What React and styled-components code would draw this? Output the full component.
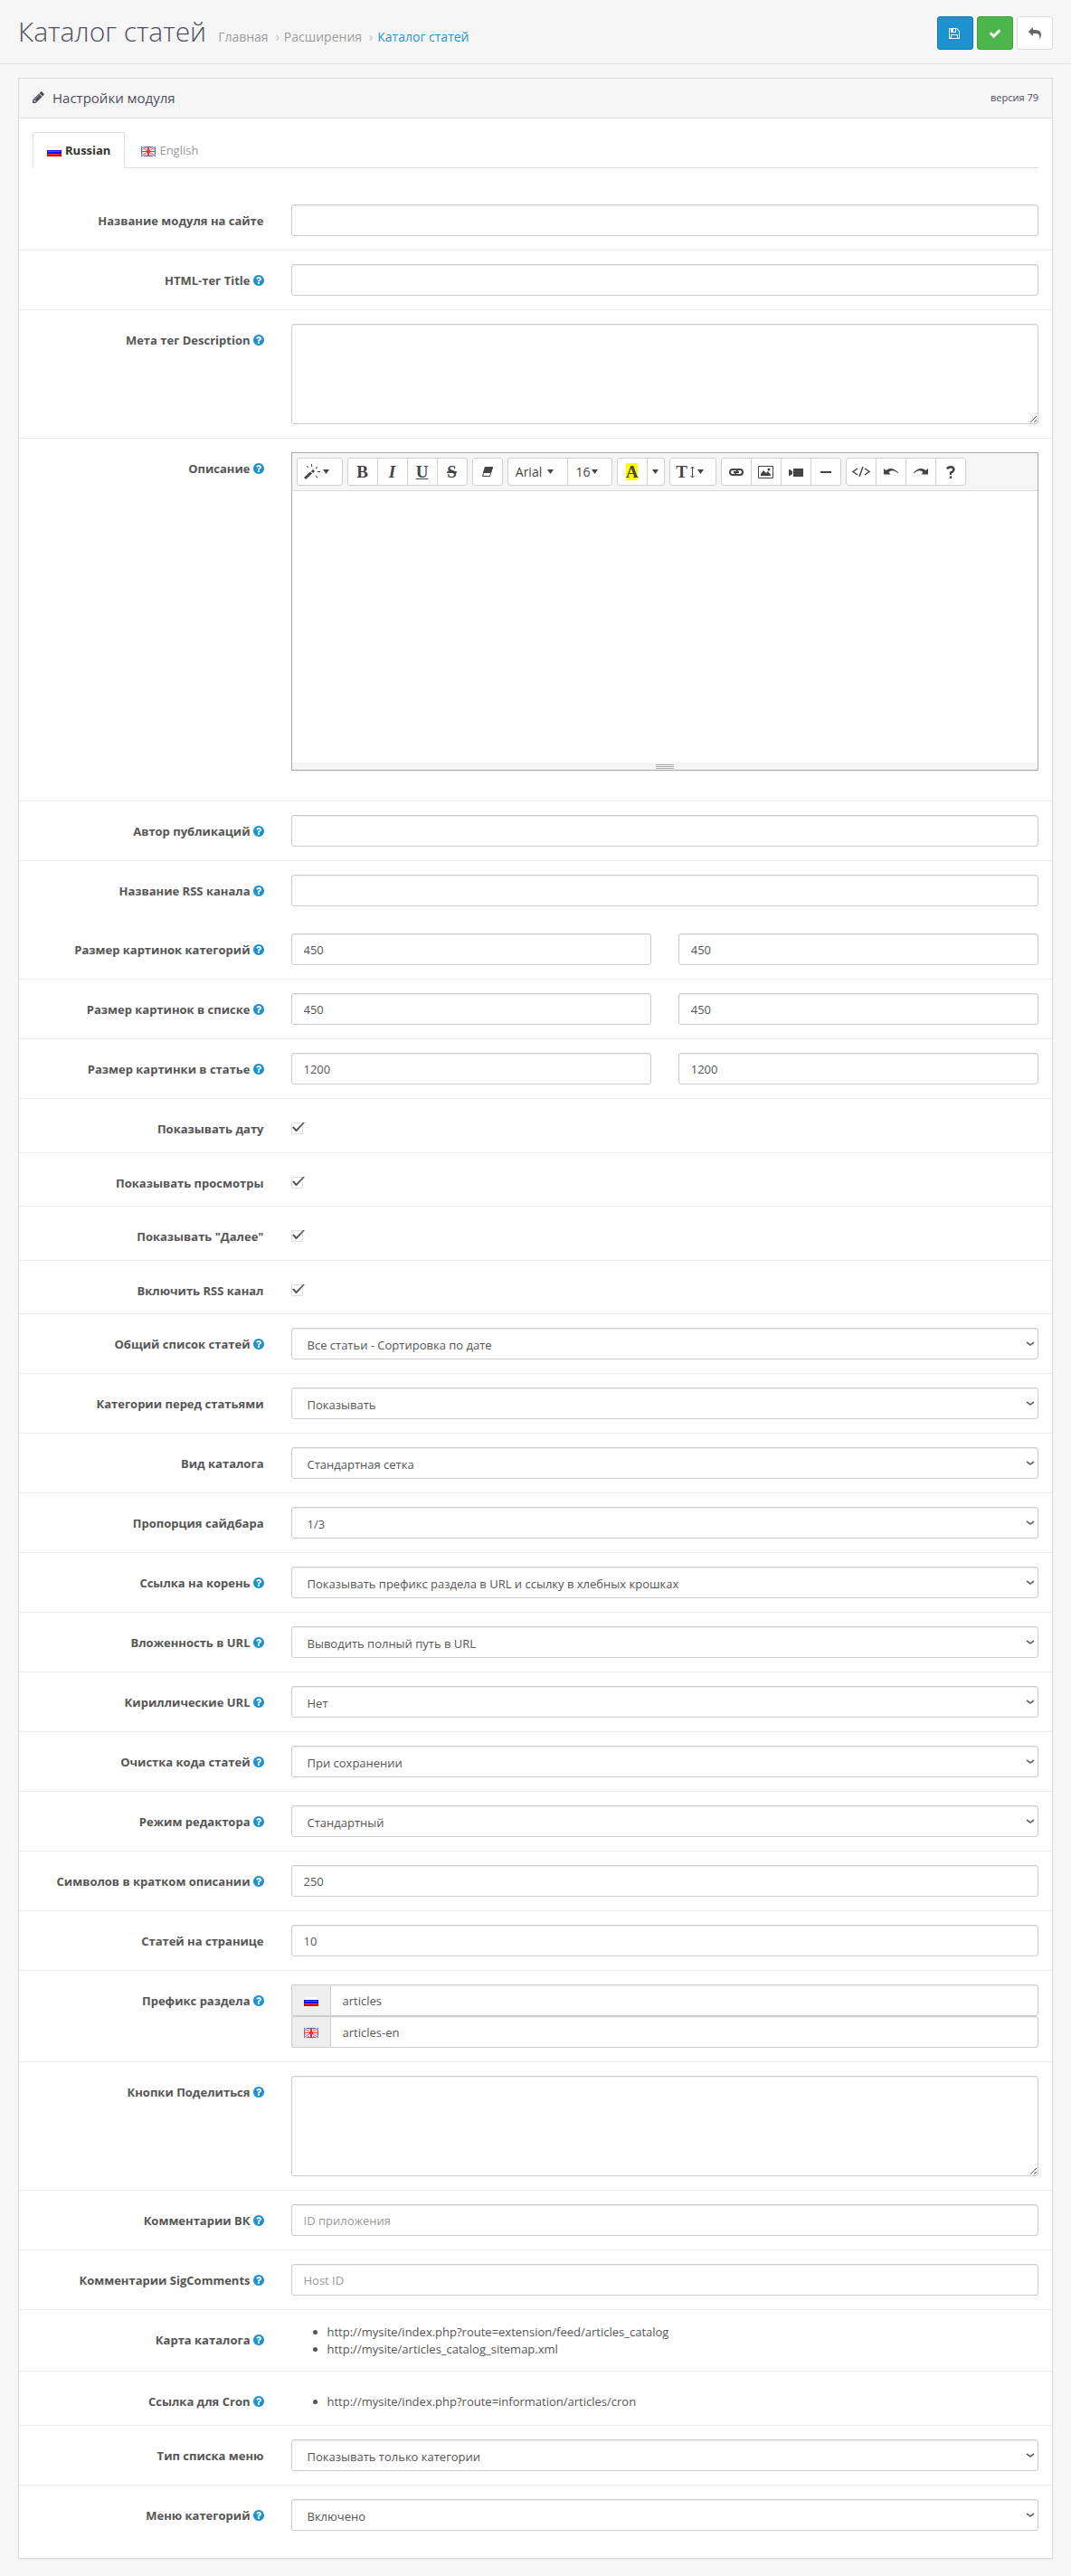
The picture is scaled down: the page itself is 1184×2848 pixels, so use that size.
import React from "react";
import styled, { createGlobalStyle } from "styled-components";

const Global = createGlobalStyle`
  *, *::before, *::after { box-sizing: border-box; }
  body {
    margin: 0;
    background: #f6f6f6;
    color: #666;
    font-family: "Open Sans", "Noto Sans", sans-serif;
    font-size: 12px;
    line-height: 18px;
  }
  button, input, select, textarea { font-family: inherit; }
`;

const PATHS = {
  save: "M384 1536h768v-384h-768v384zm896 0h128v-896q0-14-10-38.5t-20-34.5l-281-281q-10-10-34-20t-39-10v416q0 40-28 68t-68 28h-576q-40 0-68-28t-28-68v-416h-128v1280h128v-416q0-40 28-68t68-28h832q40 0 68 28t28 68v416zm-384-928v-320q0-13-9.5-22.5t-22.5-9.5h-192q-13 0-22.5 9.5t-9.5 22.5v320q0 13 9.5 22.5t22.5 9.5h192q13 0 22.5-9.5t9.5-22.5zm640 32v928q0 40-28 68t-68 28h-1344q-40 0-68-28t-28-68v-1344q0-40 28-68t68-28h928q40 0 88 20t76 48l280 280q28 28 48 76t20 88z",
  check: "M1671 566q0 40-28 68l-724 724-136 136q-28 28-68 28t-68-28l-136-136-362-362q-28-28-28-68t28-68l136-136q28-28 68-28t68 28l294 295 656-657q28-28 68-28t68 28l136 136q28 28 28 68z",
  reply: "M1792 1120q0 166-127 451-3 7-10.5 24t-13.5 30-13 22q-12 17-28 17-15 0-23.5-10t-8.5-25q0-9 2.5-26.5t2.5-23.5q5-68 5-123 0-101-17.5-181t-48.5-138.5-80-101-105.5-69.5-133-42.5-154-21.5-175.5-6h-224v256q0 26-19 45t-45 19-45-19l-512-512q-19-19-19-45t19-45l512-512q19-19 45-19t45 19 19 45v256h224q713 0 875 403 53 134 53 333z",
  pencil: "M491 1536l91-91-235-235-91 91v107h128v128h107zm523-928q0-22-22-22-10 0-17 7l-542 542q-7 7-7 17 0 22 22 22 10 0 17-7l542-542q7-7 7-17zm-54-192l416 416-832 832h-416v-416zm683 96q0 53-37 90l-166 166-416-416 166-165q36-38 90-38 53 0 91 38l235 234q37 39 37 91z",
  help: "M1024 1376v-192q0-14-9-23t-23-9h-192q-14 0-23 9t-9 23v192q0 14 9 23t23 9h192q14 0 23-9t9-23zm256-672q0-88-55.5-163t-138.5-116-170-41q-243 0-371 213-15 24 8 42l132 100q7 6 19 6 16 0 25-12 53-68 86-92 34-24 86-24 48 0 85.5 26t37.5 59q0 38-20 61t-68 45q-63 28-115.5 86.5t-52.5 125.5v36q0 14 9 23t23 9h192q14 0 23-9t9-23q0-19 21.5-49.5t54.5-49.5q32-18 49-28.5t46-35 44.5-48 28-60.5 12.5-81zm384 192q0 209-103 385.5t-279.5 279.5-385.5 103-385.5-103-279.5-279.5-103-385.5 103-385.5 279.5-279.5 385.5-103 385.5 103 279.5 279.5 103 385.5z",
};

const Glyph = ({ name, size }) => (
  <svg width={size} height={size} viewBox="0 0 1792 1792" fill="currentColor" aria-hidden="true">
    <path d={PATHS[name]} />
  </svg>
);

const NarrowGlyph = ({ name, width, height }) => (
  <svg width={width} height={height} viewBox="128 0 1536 1792" fill="currentColor" aria-hidden="true">
    <path d={PATHS[name]} />
  </svg>
);

/* Page header */

const PageHeader = styled.header`
  display: flex;
  justify-content: space-between;
  align-items: flex-start;
  padding: 18px 20px 15px;
  border-bottom: 1px solid #e7e7e7;
`;

const TitleLine = styled.div`
  display: flex;
  align-items: baseline;
  flex-wrap: wrap;
`;

const Title = styled.h1`
  margin: 0;
  color: #4c4d5a;
  font-size: 30px;
  font-weight: 300;
  line-height: 34px;
  text-shadow: 0 1px #fff;
`;

const Crumbs = styled.ol`
  display: flex;
  margin: 0 0 0 13px;
  padding: 0;
  list-style: none;
  font-size: 14px;
  text-shadow: 0 1px #fff;

  li + li::before {
    content: "›";
    padding: 0 5px 0 8px;
    color: #bbb;
  }
`;

const Crumb = styled.a`
  color: ${(p) => (p.$current ? "#1e91cf" : "#999")};
  text-decoration: none;
`;

const Actions = styled.div`
  display: flex;
  gap: 4px;
`;

const ActionButton = styled.button`
  display: flex;
  align-items: center;
  justify-content: center;
  width: 40px;
  height: 37px;
  padding: 0;
  border: 1px solid ${(p) => p.$edge};
  border-radius: 3px;
  background: ${(p) => p.$fill};
  color: ${(p) => p.$ink};
`;

/* Panel */

const Panel = styled.section`
  margin: 15px 20px 19px;
  border: 1px solid #dcdcdc;
  background: #fff;
  box-shadow: 0 1px 1px rgba(0, 0, 0, 0.05);
`;

const PanelHeading = styled.div`
  display: flex;
  align-items: center;
  justify-content: space-between;
  height: 44px;
  padding: 0 15px 2px;
  border-bottom: 1px solid #dcdcdc;
  color: #4c4d5a;
  background: #f6f6f6;
`;

const PanelTitle = styled.h2`
  display: flex;
  align-items: center;
  gap: 9px;
  margin: 0;
  font-size: 15px;
  font-weight: 400;
`;

const Version = styled.span`
  font-size: 11px;
`;

const Tabs = styled.div`
  display: flex;
  height: 40px;
  margin: 15px 15px 25px;
  border-bottom: 1px solid #ddd;
`;

const Tab = styled.button`
  display: flex;
  align-items: center;
  gap: 4px;
  height: 40px;
  margin-right: 2px;
  padding: 0 15px;
  border: 1px solid ${(p) => (p.$active ? "#ddd" : "transparent")};
  border-bottom-color: ${(p) => (p.$active ? "#fff" : "transparent")};
  border-radius: 2px 2px 0 0;
  background: ${(p) => (p.$active ? "#fff" : "transparent")};
  color: ${(p) => (p.$active ? "#333" : "#999")};
  font-size: 13px;
  font-weight: ${(p) => (p.$active ? 700 : 400)};
`;

/* Form */

const Form = styled.form`
  padding-bottom: 15px;
`;

const Row = styled.div`
  display: grid;
  grid-template-columns: 1fr 3fr;
  padding: 15px 0;
  border-top: ${(p) => (p.$plain ? 0 : "1px solid #ededed")};
`;

const Label = styled.label`
  padding: 9px 15px 0;
  color: #555;
  font-size: 13px;
  font-weight: 700;
  text-align: right;

  svg {
    margin-left: 3px;
    color: #1e91cf;
    vertical-align: -2px;
  }
`;

const Cell = styled.div`
  padding: 0 15px;
`;

const Pair = styled(Cell)`
  display: grid;
  grid-template-columns: 1fr 1fr;
  gap: 30px;
`;

const Input = styled.input`
  display: block;
  width: 100%;
  height: 35px;
  padding: 8px 13px;
  border: 1px solid #ccc;
  border-radius: 3px;
  background: #fff;
  box-shadow: inset 0 1px 1px rgba(0, 0, 0, 0.075);
  color: #555;
  font-size: 13px;
  line-height: 18px;

  &::placeholder {
    color: #999;
  }
`;

const TextArea = styled(Input).attrs({ as: "textarea" })`
  height: 111px;
  resize: vertical;
`;

const CHEVRON =
  "data:image/svg+xml,%3Csvg xmlns='http://www.w3.org/2000/svg' width='10' height='6' fill='none' stroke='%23666' stroke-width='1.600'%3E%3Cpath d='M1 1l4 3 4-3'/%3E%3C/svg%3E";

const Select = styled(Input).attrs({ as: "select" })`
  appearance: none;
  padding: 9px 24px 6px 17px;
  background: #fff url("${CHEVRON}") no-repeat right 3px center;
`;

const CheckRows = styled.div`
  display: grid;
  grid-auto-rows: 1fr;
  min-height: 238px;
`;

const CheckCell = styled(Cell)`
  padding-top: 11px;
`;

const CheckWrap = styled.span`
  position: relative;
  display: block;
  width: 13px;
  height: 13px;

  svg {
    position: absolute;
    left: 1px;
    top: 0;
    pointer-events: none;
  }
`;

const Check = styled.input`
  appearance: none;
  display: block;
  width: 13px;
  height: 13px;
  margin: 0;
  border: 1px solid #ddd;
  border-radius: 1px;
  background: #fff;

  & + svg { visibility: hidden; }
  &:checked + svg { visibility: visible; }
`;

const Addon = styled.div`
  display: flex;

  ${Input} {
    border-radius: 0 3px 3px 0;
  }
`;

const AddonFlag = styled.span`
  display: flex;
  align-items: center;
  justify-content: center;
  flex: 0 0 43px;
  border: 1px solid #ccc;
  border-right: 0;
  border-radius: 3px 0 0 3px;
  background: #eee;
`;

const Links = styled.ul`
  display: grid;
  gap: 1px;
  margin: 0;
  padding: ${(p) => (p.$single ? "9px 0 2px" : "0")};
  padding-left: 40px;
  color: #555;
  font-size: 13px;
`;

/* Editor */

const Editor = styled.div`
  margin-bottom: 18px;
  border: 1px solid #a9a9a9;
  background: #fff;
  box-shadow: 0 1px 1px rgba(0, 0, 0, 0.05);
`;

const Toolbar = styled.div`
  display: flex;
  flex-wrap: wrap;
  gap: 5px;
  padding: 5px;
  border-bottom: 1px solid #ddd;
  background: #f5f5f5;
`;

const Group = styled.div`
  display: flex;
`;

const Tool = styled.button`
  display: flex;
  align-items: center;
  justify-content: center;
  gap: ${(p) => p.$gap || 0}px;
  width: ${(p) => p.$w || 34}px;
  height: 31px;
  padding: 0 ${(p) => (p.$menu ? 6 : 0)}px 0 0;
  border: 1px solid #d0d0d0;
  background: #fff;
  color: #444;
  font-size: 14px;

  & + & { margin-left: -1px; }
  &:first-child { border-top-left-radius: 3px; border-bottom-left-radius: 3px; }
  &:last-child { border-top-right-radius: 3px; border-bottom-right-radius: 3px; }
`;

const Serif = styled.span`
  font-family: "Liberation Serif", serif;
  font-size: 19px;
  font-weight: 700;
  line-height: 19px;
  font-style: ${(p) => (p.$italic ? "italic" : "normal")};
  text-decoration: ${(p) => p.$line || "none"};
  background: ${(p) => p.$mark || "none"};
`;

const Canvas = styled.div`
  height: 300px;
`;

const StatusBar = styled.div`
  display: flex;
  flex-direction: column;
  align-items: center;
  gap: 1px;
  height: 8px;
  padding-top: 2px;
  background: #f5f5f5;
`;

const Grip = styled.i`
  width: 20px;
  height: 1px;
  background: #a9a9a9;
`;

const Caret = () => (
  <svg width="7" height="5" viewBox="0 0 7 5" fill="currentColor" aria-hidden="true">
    <path d="M0 0h7L3.5 5z" />
  </svg>
);

const Draw = ({ w = 18, h = 16, children }) => (
  <svg width={w} height={h} viewBox={`0 0 ${w} ${h}`} fill="none" stroke="currentColor" aria-hidden="true">
    {children}
  </svg>
);

const Flag = styled.svg.attrs({ width: 16, height: 11, viewBox: "0 0 16 11", "aria-hidden": true })`
  margin-top: 2px;
`;

const FlagRu = () => (
  <Flag>
    <path fill="#ececf0" d="M0 0h16v4H0z" />
    <path fill="#fff" d="M1 1h14v3H1z" />
    <path fill="#1010e8" d="M0 4h16v4H0z" />
    <path fill="#5555ff" d="M1 5h14v1H1z" />
    <path fill="#d80000" d="M0 8h16v3H0z" />
    <path fill="#ff3a3a" d="M1 8h14v1H1z" />
  </Flag>
);

const FlagEn = () => (
  <Flag>
    <path fill="#5a68b8" d="M0 0h16v11H0z" />
    <path fill="#a9b5ee" d="M1 1h14v9H1z" />
    <path stroke="#fff" strokeWidth="2.600" d="M1 1l14 9M15 1L1 10" />
    <path stroke="#f07070" strokeWidth="1.200" d="M1 1l14 9M15 1L1 10" />
    <path fill="#fbe6e6" d="M6 1h4v9H6zM1 4h14v3H1z" />
    <path fill="#fa3030" d="M7 0h2v11H7zM0 5h16v1H0z" />
    <path fill="#fa3030" d="M6 4h4v3H6z" />
  </Flag>
);

const FieldRow = ({ id, label, help, plain, children }) => (
  <Row $plain={plain}>
    <Label as={id ? "label" : "span"} htmlFor={id}>
      {label}
      {help && <NarrowGlyph name="help" width={12} height={14} />}
    </Label>
    {children}
  </Row>
);

const TextRow = ({ value = "", placeholder, ...row }) => (
  <FieldRow {...row}>
    <Cell>
      <Input id={row.id} type="text" defaultValue={value} placeholder={placeholder} />
    </Cell>
  </FieldRow>
);

const AreaRow = (row) => (
  <FieldRow {...row}>
    <Cell>
      <TextArea id={row.id} />
    </Cell>
  </FieldRow>
);

const SizeRow = ({ value, ...row }) => (
  <FieldRow {...row}>
    <Pair>
      <Input id={row.id} type="text" defaultValue={value} />
      <Input type="text" defaultValue={value} aria-label={row.label} />
    </Pair>
  </FieldRow>
);

const SelectRow = ({ value, ...row }) => (
  <FieldRow {...row}>
    <Cell>
      <Select id={row.id}>
        <option>{value}</option>
      </Select>
    </Cell>
  </FieldRow>
);

const CheckRow = (row) => (
  <FieldRow {...row}>
    <CheckCell>
      <CheckWrap>
        <Check id={row.id} type="checkbox" defaultChecked />
        <svg width="14" height="11" viewBox="0 0 14 11" fill="#555" aria-hidden="true">
          <path d="M0 5.500L2 4.500L4.500 7.500L12 0H14L5 10H4z" />
        </svg>
      </CheckWrap>
    </CheckCell>
  </FieldRow>
);

const CHECKS = ["Показывать дату", "Показывать просмотры", 'Показывать "Далее"', "Включить RSS канал"];

const SELECTS = [
  ["Общий список статей", "Все статьи - Сортировка по дате", true],
  ["Категории перед статьями", "Показывать", false],
  ["Вид каталога", "Стандартная сетка", false],
  ["Пропорция сайдбара", "1/3", false],
  ["Ссылка на корень", "Показывать префикс раздела в URL и ссылку в хлебных крошках", true],
  ["Вложенность в URL", "Выводить полный путь в URL", true],
  ["Кириллические URL", "Нет", true],
  ["Очистка кода статей", "При сохранении", true],
  ["Режим редактора", "Стандартный", true],
];

const EditorBox = () => (
  <Editor>
    <Toolbar>
      <Group>
        <Tool type="button" $menu $w={51} $gap={2} aria-label="Стиль">
          <Draw w={19} h={18}>
            <path strokeWidth="3" d="M1 16L8 9.500" />
            <path strokeWidth="3" d="M9 9L11 7" />
            <path strokeWidth="1" d="M8.500 0v3M3 2l2 2M15 3l-2 2M15 8.500h3M13 13l2 2" />
          </Draw>
          <Caret />
        </Tool>
      </Group>
      <Group>
        <Tool type="button"><Serif>B</Serif></Tool>
        <Tool type="button"><Serif $italic>I</Serif></Tool>
        <Tool type="button"><Serif $line="underline">U</Serif></Tool>
        <Tool type="button"><Serif $line="line-through 2px">S</Serif></Tool>
      </Group>
      <Group>
        <Tool type="button" aria-label="Очистить">
          <Draw w={14} h={14}>
            <path d="M4.500 1.500h8l-3 10h-8z" />
            <path fill="currentColor" d="M4.500 1.500h8l-2 6h-8z" />
          </Draw>
        </Tool>
      </Group>
      <Group>
        <Tool type="button" $menu $w={67} $gap={6}>Arial <Caret /></Tool>
        <Tool type="button" $menu $w={50} $gap={1}>16<Caret /></Tool>
      </Group>
      <Group>
        <Tool type="button"><Serif $mark="#ff0">A</Serif></Tool>
        <Tool type="button" $w={20} aria-label="Цвет"><Caret /></Tool>
      </Group>
      <Group>
        <Tool type="button" $menu $w={52} $gap={3}>
          <Serif>T</Serif>
          <Draw w={5} h={14}>
            <path d="M2.500 1v12M.5 3l2-2 2 2M.5 11l2 2 2-2" />
          </Draw>
          <Caret />
        </Tool>
      </Group>
      <Group>
        <Tool type="button" aria-label="Ссылка">
          <Draw w={18} h={10}>
            <path strokeWidth="2" d="M8 8H5a3 3 0 0 1 0-6h3q2 0 2 2M10 2h3a3 3 0 0 1 0 6h-3q-2 0-2-2M6 5h6" />
          </Draw>
        </Tool>
        <Tool type="button" aria-label="Картинка">
          <Draw w={17} h={14}>
            <path d="M.5.5h16v13H.5z" />
            <path fill="currentColor" stroke="none" d="M3 11V9l3-4 3 3 2-2 3 4v1z" />
            <circle cx="12" cy="4" r="1.500" fill="currentColor" stroke="none" />
          </Draw>
        </Tool>
        <Tool type="button" aria-label="Видео">
          <Draw w={16} h={10}>
            <path fill="currentColor" stroke="none" d="M5 1h11v9H5zM0 2h1l3 2v3L1 9H0z" />
          </Draw>
        </Tool>
        <Tool type="button" aria-label="Линия">
          <Draw w={12} h={4}>
            <path strokeWidth="2" d="M0 2h12" />
          </Draw>
        </Tool>
      </Group>
      <Group>
        <Tool type="button" aria-label="Код">
          <Draw w={20} h={13}>
            <path strokeWidth="1.500" d="M6 3L1 6.500l5 3.500M14 3l5 3.500-5 3.500M12 1L8 12" />
          </Draw>
        </Tool>
        <Tool type="button" aria-label="Отменить">
          <Draw w={18} h={10}>
            <path fill="currentColor" stroke="none" d="M1 1l2.500 2Q10-2 17 5.500v1Q11 1 6.500 5l2 2.500H1z" />
          </Draw>
        </Tool>
        <Tool type="button" aria-label="Повторить">
          <Draw w={18} h={10}>
            <path fill="currentColor" stroke="none" d="M17 1l-2.500 2Q8-2 1 5.500v1Q7 1 11.500 5l-2 2.500H17z" />
          </Draw>
        </Tool>
        <Tool type="button" aria-label="Справка">
          <Draw w={10} h={14}>
            <path strokeWidth="2.400" d="M1 3.500Q2 1.200 5 1.200t3.500 2.500Q8.500 6 5 7.500V10M5 11.500V14" />
          </Draw>
        </Tool>
      </Group>
    </Toolbar>
    <Canvas id="description" role="textbox" aria-label="Описание" contentEditable suppressContentEditableWarning />
    <StatusBar>
      <Grip />
      <Grip />
      <Grip />
    </StatusBar>
  </Editor>
);

export default function App() {
  return (
    <>
      <Global />
      <PageHeader>
        <TitleLine>
          <Title>Каталог статей</Title>
          <Crumbs>
            <li><Crumb href="#home">Главная</Crumb></li>
            <li><Crumb href="#extensions">Расширения</Crumb></li>
            <li><Crumb href="#catalog" $current>Каталог статей</Crumb></li>
          </Crumbs>
        </TitleLine>
        <Actions>
          <ActionButton type="button" aria-label="Сохранить" $fill="#1e91cf" $edge="#1978ab" $ink="#fff">
            <Glyph name="save" size={14} />
          </ActionButton>
          <ActionButton type="button" aria-label="Применить" $fill="#4cb64c" $edge="#409d40" $ink="#fff">
            <Glyph name="check" size={14} />
          </ActionButton>
          <ActionButton type="button" aria-label="Назад" $fill="#fff" $edge="#ddd" $ink="#666">
            <Glyph name="reply" size={14} />
          </ActionButton>
        </Actions>
      </PageHeader>

      <Panel>
        <PanelHeading>
          <PanelTitle>
            <NarrowGlyph name="pencil" width={13} height={15} />
            Настройки модуля
          </PanelTitle>
          <Version>версия 79</Version>
        </PanelHeading>

        <Tabs role="tablist">
          <Tab type="button" role="tab" aria-selected="true" $active><FlagRu />Russian</Tab>
          <Tab type="button" role="tab" aria-selected="false"><FlagEn />English</Tab>
        </Tabs>

        <Form>
          <TextRow id="name" label="Название модуля на сайте" plain />
          <TextRow id="title" label="HTML-тег Title" help />
          <AreaRow id="meta" label="Мета тег Description" help />
          <FieldRow label="Описание" help>
            <Cell><EditorBox /></Cell>
          </FieldRow>
          <TextRow id="author" label="Автор публикаций" help />
          <TextRow id="rss" label="Название RSS канала" help />
          <SizeRow id="size-category" label="Размер картинок категорий" value="450" help plain />
          <SizeRow id="size-list" label="Размер картинок в списке" value="450" help />
          <SizeRow id="size-article" label="Размер картинки в статье" value="1200" help />
          <CheckRows>
            {CHECKS.map((label, i) => (
              <CheckRow key={label} id={`check-${i}`} label={label} />
            ))}
          </CheckRows>
          {SELECTS.map(([label, value, help], i) => (
            <SelectRow key={label} id={`select-${i}`} label={label} value={value} help={help} />
          ))}
          <TextRow id="chars" label="Символов в кратком описании" value="250" help />
          <TextRow id="per-page" label="Статей на странице" value="10" />
          <FieldRow id="prefix-ru" label="Префикс раздела" help>
            <Cell>
              <Addon>
                <AddonFlag><FlagRu /></AddonFlag>
                <Input id="prefix-ru" type="text" defaultValue="articles" />
              </Addon>
              <Addon>
                <AddonFlag><FlagEn /></AddonFlag>
                <Input type="text" defaultValue="articles-en" aria-label="Префикс раздела, English" />
              </Addon>
            </Cell>
          </FieldRow>
          <AreaRow id="share" label="Кнопки Поделиться" help />
          <TextRow id="vk" label="Комментарии ВК" placeholder="ID приложения" help />
          <TextRow id="sig" label="Комментарии SigComments" placeholder="Host ID" help />
          <FieldRow label="Карта каталога" help>
            <Cell>
              <Links>
                <li>http://mysite/index.php?route=extension/feed/articles_catalog</li>
                <li>http://mysite/articles_catalog_sitemap.xml</li>
              </Links>
            </Cell>
          </FieldRow>
          <FieldRow label="Ссылка для Cron" help>
            <Cell>
              <Links $single>
                <li>http://mysite/index.php?route=information/articles/cron</li>
              </Links>
            </Cell>
          </FieldRow>
          <SelectRow id="menu-type" label="Тип списка меню" value="Показывать только категории" />
          <SelectRow id="menu-cat" label="Меню категорий" value="Включено" help />
        </Form>
      </Panel>
    </>
  );
}
